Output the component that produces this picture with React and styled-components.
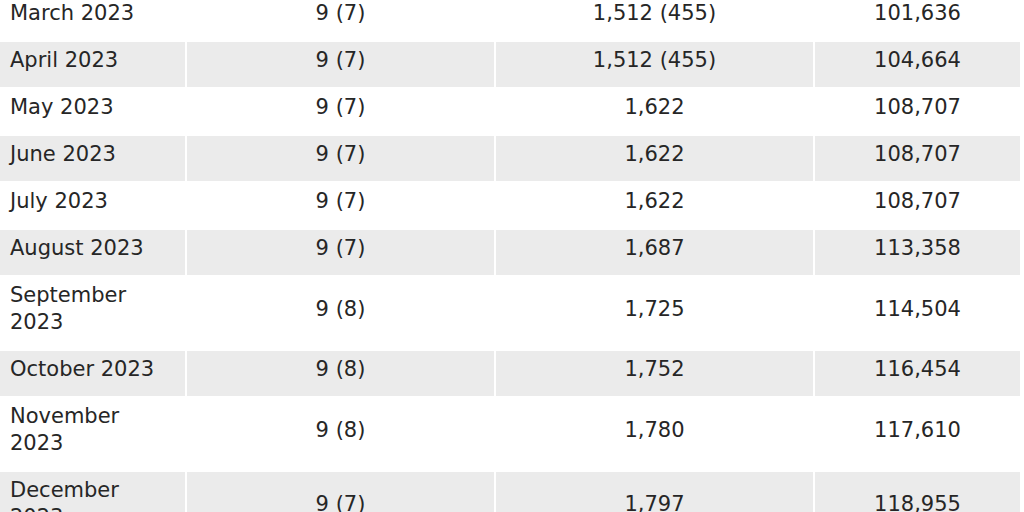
import React from "react";
import styled, { createGlobalStyle } from "styled-components";

const GlobalStyle = createGlobalStyle`
  body {
    margin: 0;
    background: #fff;
    font-family: "DejaVu Sans", "Liberation Sans", sans-serif;
    color: #262626;
  }
`;

const Page = styled.div`
  width: 1024px;
  height: 512px;
  overflow: hidden;
`;

const Table = styled.table`
  width: 1020px;
  margin-top: -5px;
  table-layout: fixed;
  border-collapse: separate;
  border-spacing: 0;
  font-size: 21px;
  line-height: 27px;
`;

const Row = styled.tr`
  background: ${props => (props.$shaded ? "#ebebeb" : "#fff")};
`;

const Cell = styled.td`
  box-sizing: border-box;
  width: ${props => props.$width}px;
  padding: 5px 10px 13px;
  border-bottom: 2px solid #fff;
  border-left: ${props => (props.$first ? "none" : "2px solid #fff")};
  text-align: ${props => (props.$first ? "left" : "center")};
  vertical-align: middle;
`;

const widths = [185, 309, 319, 207];

const rows = [
  ["March 2023", "9 (7)", "1,512 (455)", "101,636"],
  ["April 2023", "9 (7)", "1,512 (455)", "104,664"],
  ["May 2023", "9 (7)", "1,622", "108,707"],
  ["June 2023", "9 (7)", "1,622", "108,707"],
  ["July 2023", "9 (7)", "1,622", "108,707"],
  ["August 2023", "9 (7)", "1,687", "113,358"],
  ["September 2023", "9 (8)", "1,725", "114,504"],
  ["October 2023", "9 (8)", "1,752", "116,454"],
  ["November 2023", "9 (8)", "1,780", "117,610"],
  ["December 2023", "9 (7)", "1,797", "118,955"]
];

export default function App() {
  return (
    <Page>
      <GlobalStyle />
      <Table>
        <tbody>
          {rows.map((row, i) => (
            <Row key={row[0]} $shaded={i % 2 === 1}>
              {row.map((value, j) => (
                <Cell key={j} $first={j === 0} $width={widths[j]}>
                  {value}
                </Cell>
              ))}
            </Row>
          ))}
        </tbody>
      </Table>
    </Page>
  );
}
